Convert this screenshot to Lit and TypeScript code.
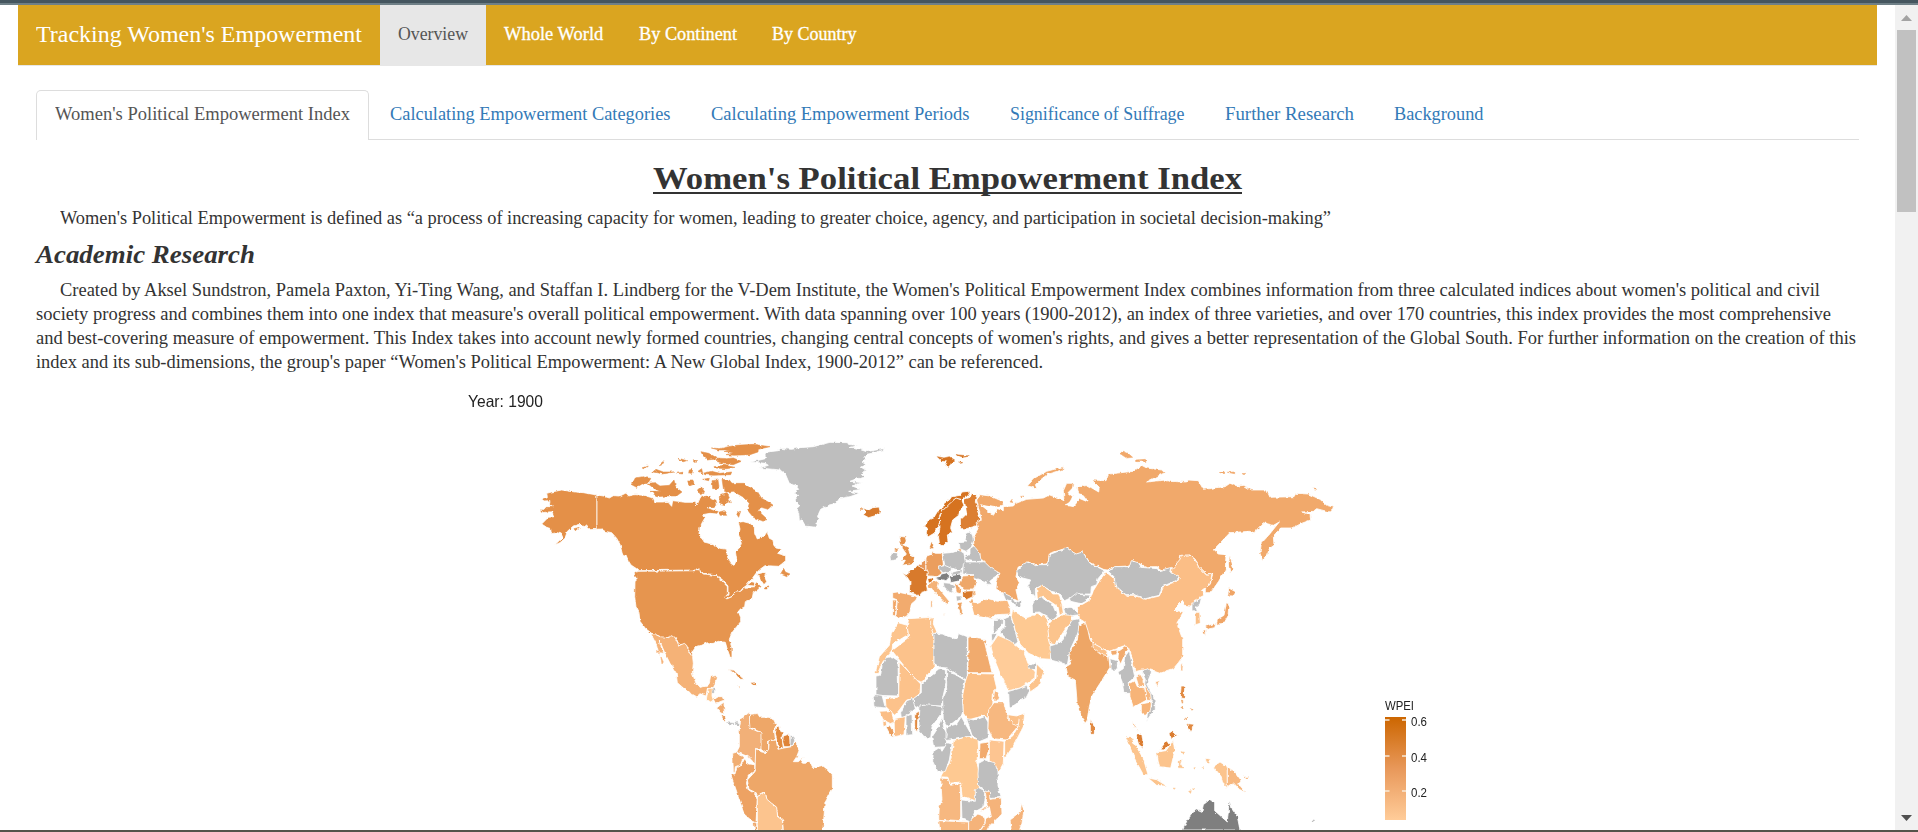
import { LitElement, html, css, svg } from "lit";
import { customElement, property } from "lit/decorators.js";

/** One line of text, widened or narrowed so that it fills a given measure. */
@customElement("fit-line")
class FitLine extends LitElement {
  @property({ type: Number }) measure = 100;
  static styles = css`
    :host { display: block; white-space: nowrap; }
    .t { display: inline-block; transform-origin: 0 50%; }
  `;
  firstUpdated() {
    const t = this.renderRoot.querySelector(".t") as HTMLElement;
    const natural = t.getBoundingClientRect().width;
    this.style.width = this.measure + "px";
    t.style.transform = `scaleX(${this.measure / natural})`;
  }
  render() {
    return html`<span class="t"><slot></slot></span>`;
  }
}

const G = "#bebebe", D = "#7f7f7f", CA = "#e49048", US = "#e6954f", RU = "#f1a96b", CN = "#fbbe86",
  IN = "#eea666", ID = "#fcc48d", AL = "#fcc28b", DR = "#ffcc99", PA = "#fec992", AN = "#f7b880",
  BR = "#eea768", NO = "#d67320", FR = "#d87a2c", W = "#ffffff";

type Shape = [string, string];
type Sheet = { x: number; y: number; land: Shape[] };

/* Country outlines, grouped in sheets drawn at three units to the pixel. */
const sheets: Sheet[] = [
  { x: 520, y: 430, land: [
    [CA, "M231,195 190,188 165,186 125,180 95,186 80,190 82,200 64,206 72,213 90,212 88,222 100,230 78,230 72,238 58,238 66,248 96,245 102,260 85,262 65,282 80,292 92,296 94,311 112,308 124,312 128,322 104,345 120,338 135,325 142,304 160,288 178,283 190,290 198,287 212,299 231,298Z"],
    [CA, "M231,195 250,198 268,204 280,197 300,198 318,189 326,198 345,194 372,196 385,200 400,204 405,216 430,216 442,214 455,229 458,212 475,214 495,217 525,217 531,225 540,205 546,196 553,200 560,194 575,207 590,212 592,224 582,232 562,232 580,240 598,244 590,252 570,250 548,254 556,262 548,275 540,292 537,315 548,322 552,336 575,342 600,355 620,358 622,380 632,400 642,406 650,390 646,364 658,354 664,337 656,315 660,297 655,277 670,275 690,280 703,292 704,308 712,327 722,320 732,319 742,304 748,325 759,330 761,345 768,354 786,358 773,370 797,377 797,392 785,402 776,409 735,407 720,418 708,430 697,445 685,458 680,466 668,475 660,485 645,487 635,500 620,506 614,500 624,495 624,468 605,447 585,434 550,430 538,420 356,422 348,415 333,405 325,392 318,375 307,372 300,343 290,325 275,308 255,304 245,297 231,298Z"],
    [US, "M350,424 L538,422 550,432 585,436 603,450 622,470 622,495 614,501 620,507 636,500 647,487 662,484 675,472 703,470 712,455 722,468 716,478 700,488 696,508 676,515 674,530 660,538 655,545 662,562 662,575 650,590 636,608 628,628 636,655 636,688 630,680 622,658 616,637 604,636 595,634 580,640 568,642 562,638 545,646 528,650 518,664 516,682 508,664 498,645 483,643 477,648 465,622 430,624 410,615 395,610 377,596 360,574 357,548 348,530 344,500 345,455 352,447Z"],
    [CA, "M680,466 695,455 708,458 703,468Z M712,432 728,428 738,428 734,440 740,455 732,464 722,450 718,440Z M732,478 745,464 748,470 740,479Z"],
  ] },
  { x: 620, y: 620, land: [
    ["#f5b277", "M93,42 103,42 120,50 147,53 153,47 165,52 177,77 193,70 200,76 208,98 218,112 220,130 217,160 228,190 240,202 262,198 268,190 272,170 290,166 285,192 280,204 262,206 258,228 240,221 230,230 205,216 190,204 172,188 168,158 150,130 135,100 118,60 120,72 132,100 116,98 110,75Z"],
    [PA, "M264,208 277,208 276,228 280,240 272,246 259,238Z"],
    ["#f1ab6f", "M280,238 292,230 310,230 314,240 300,245 288,252Z M290,264 312,246 313,282 302,279Z"],
    [CA, "M302,284 312,290 318,304 310,300Z M320,148 337,150 350,158 372,178 358,178 345,160Z M390,188 403,186 411,196 398,195Z"],
    ["#f2b078", "M358,324 362,300 372,289 388,277 390,303 392,326 415,334 424,336 425,362 425,388 407,385 406,433 385,410 350,396 358,380Z"],
    [BR, "M388,302 390,283 400,282 412,280 420,292 445,292 462,300 468,314 463,330 466,358 446,362 446,390 436,398 423,388 423,336 405,328 390,322Z"],
    ["#e28b40", "M470,320 480,318 482,334 490,338 486,350 490,385 476,388 470,356 466,340Z"],
    ["#df8438", "M490,348 508,342 512,380 492,380 488,365Z"],
    [G, "M511,346 521,348 524,362 518,378 510,376Z"],
    [BR, "M407,386 425,396 438,398 446,388 448,362 468,360 474,388 492,384 515,380 527,366 537,392 530,410 520,425 535,425 550,412 545,430 557,430 567,420 577,443 605,437 622,450 637,467 637,508 615,548 612,590 608,640 490,640 488,600 473,588 468,560 440,540 436,516 415,528 402,515 387,508 382,480 405,455Z"],
    ["#f1ad71", "M338,400 350,396 370,412 362,434 346,440 344,460 340,455Z"],
    ["#eda263", "M332,462 345,462 350,442 362,438 374,416 385,432 404,434 404,454 385,468 379,490 386,510 402,520 412,535 408,610 402,608 372,582 362,550 345,500Z"],
    ["#fcc48e", "M412,530 425,523 435,516 441,538 455,550 470,562 473,590 487,600 489,640 412,640Z"],
    ["#eda263", "M400,605 410,610 410,640 404,632Z"],
  ] },
  { x: 700, y: 430, land: [
    [G, "M150,96 180,90 196,86 195,75 202,66 235,62 240,55 275,58 300,53 340,50 362,44 390,37 440,38 442,43 475,46 450,52 490,56 484,60 500,65 550,56 552,60 520,69 500,73 492,82 495,88 486,96 498,104 484,112 500,122 484,130 496,142 470,146 450,154 486,158 456,168 484,178 446,184 478,190 450,200 418,206 408,220 384,226 362,238 352,260 358,266 348,276 348,292 316,288 306,270 298,272 296,248 290,236 298,228 285,210 296,196 280,188 296,178 286,166 268,160 256,132 240,120 178,114 205,106 196,100Z"],
    [FR, "M489,233 505,241 518,233 537,231 541,247 523,258 506,263 489,254 498,248Z"],
  ] },
  { x: 860, y: 440, land: [
    [NO, "M192,258 202,252 200,242 222,232 232,215 248,205 252,190 268,180 275,170 300,166 306,156 325,154 330,166 315,170 305,178 285,176 268,194 250,210 240,224 236,262 222,280 205,290 198,282 202,264Z"],
    [NO, "M236,290 240,262 238,230 252,208 272,188 288,174 305,180 312,196 300,210 296,226 278,240 272,262 277,274 262,285 264,302 246,322 238,310Z"],
    ["#dc7f33", "M312,178 330,172 336,160 350,165 346,184 354,195 352,212 362,238 348,258 320,266 302,266 301,240 320,222 316,198Z"],
    [CA, "M119,289 136,291 139,304 128,314 144,322 150,342 164,352 160,370 127,376 136,361 125,359 139,342 128,326 121,308Z M208,322 214,305 221,311 217,328Z"],
    [G, "M98,337 113,339 110,359 92,363 90,350Z"],
    ["#e8985a", "M172,380 178,372 184,374 186,362 197,358 198,392 182,384Z"],
    ["#eb9e5e", "M198,352 214,346 217,334 226,340 246,340 250,372 242,380 246,400 232,410 206,408 198,386Z"],
    [FR, "M126,400 143,405 146,394 160,390 172,376 205,395 202,416 198,430 203,452 182,458 176,467 148,456 150,425 142,412Z"],
    ["#f2ab6e", "M98,458 112,456 140,462 172,470 168,480 154,492 150,516 138,530 120,534 108,528 112,480 98,474Z"],
    ["#f1a566", "M98,480 110,480 106,528 98,526Z"],
    [NO, "M203,416 216,414 218,424 206,430Z"],
    ["#f4b277", "M203,434 220,424 236,422 232,440 250,462 268,484 262,494 245,478 225,460 215,442 204,444Z M212,482 217,482 217,502 212,502Z M246,522 256,520 252,528Z"],
    [G, "M235,378 254,374 275,384 272,394 250,398 236,390Z"],
    [D, "M224,413 240,410 244,402 268,397 268,412 258,422 238,418Z"],
    [G, "M248,340 270,338 300,332 312,340 316,366 308,384 296,390 272,384 254,376Z"],
    [G, "M272,398 308,388 304,402 276,406Z"],
    [D, "M268,408 304,402 304,414 292,424 272,428Z"],
    [G, "M250,428 270,430 290,440 276,448 284,462 268,456 252,440Z"],
    ["#f0a566", "M284,430 292,432 300,446 304,462 290,458Z"],
    ["#eea769", "M308,408 340,406 350,432 340,450 312,450 298,434Z"],
    [FR, "M308,454 340,452 338,470 318,480 308,470Z"],
    ["#eea565", "M292,488 308,486 304,498 308,520 300,526 298,510 292,504Z"],
    [G, "M288,468 302,468 304,480 290,484Z M298,308 318,306 320,294 314,280 332,276 338,288 340,304 334,322 318,334 300,326Z"],
    [G, "M314,352 330,342 330,326 344,316 362,322 360,342 372,354 362,364 338,364 316,360Z"],
    [G, "M310,372 316,366 340,366 364,366 378,364 388,378 414,386 420,400 388,422 396,434 378,432 380,426 352,416 340,404 308,402Z"],
    ["#f9ba80", "M334,486 350,488 385,476 412,484 442,480 450,500 452,522 410,524 390,536 368,528 342,526 336,502Z"],
  ] },
  { x: 1000, y: 440, land: [
    [RU, "M-70,180 -60,164 -30,168 8,184 10,196 -20,202 -42,198 -58,194 -36,212 -20,226 -8,206 10,212 10,200 40,198 48,190 80,178 130,174 150,164 170,172 192,182 190,152 200,130 220,130 216,154 222,176 202,192 200,198 222,196 236,170 264,184 250,164 236,162 232,142 262,136 296,156 298,142 276,120 318,122 326,102 400,94 425,76 440,84 485,90 494,98 440,126 498,120 505,124 560,126 565,120 595,122 610,148 675,140 690,130 712,138 732,136 755,150 800,150 810,172 882,170 888,160 925,162 960,178 980,196 1002,202 988,216 950,206 940,214 905,216 930,224 932,240 905,250 878,264 842,264 820,288 822,316 808,326 802,344 788,362 780,340 784,310 806,286 838,246 820,256 790,248 762,278 748,274 690,278 640,330 655,342 678,344 676,390 656,424 632,458 616,458 616,440 630,434 638,402 620,404 596,382 586,358 570,346 542,346 540,360 520,384 485,390 472,380 440,380 420,372 400,362 388,378 345,380 325,390 310,388 290,378 270,368 248,336 230,344 200,324 150,340 142,372 105,374 84,366 54,382 48,410 58,428 48,450 56,484 10,462 -12,446 -10,424 0,400 -30,382 -46,366 -58,356 -60,340 -78,318 -80,290 -66,266 -72,248 -56,238Z"],
    [W, "M204,158 218,170 208,190 196,194 220,200 240,176 264,186 248,166 232,160 228,142 218,144Z"],
    [RU, "M82,138 104,114 140,94 192,80 188,89 144,102 122,119 106,134 112,150 96,141Z M689,344 697,372 701,388 690,400 685,372Z"],
    [G, "M50,392 80,366 106,374 144,374 148,344 200,324 228,342 248,336 270,370 290,380 314,392 294,416 290,434 274,440 272,462 236,462 194,482 180,460 154,454 126,436 106,446 106,474 94,460 82,440 92,420 68,414 54,406Z"],
    [G, "M325,394 345,380 388,380 394,362 416,368 422,382 472,386 476,392 515,382 512,398 538,410 528,422 486,440 478,466 436,476 402,464 378,464 344,434 344,412Z"],
    [CN, "M540,358 544,346 570,345 586,360 596,382 620,406 636,402 630,432 604,452 612,466 582,482 574,498 552,496 548,484 522,510 550,516 530,550 548,598 548,650 535,668 520,686 480,700 452,690 425,690 405,695 396,650 384,620 370,618 325,635 278,610 266,584 254,546 238,536 232,502 270,480 280,452 300,420 318,396 342,416 346,438 378,466 402,466 436,478 478,468 490,442 530,424 538,412 514,398 516,386Z"],
    ["#f0a566", "M683,467 686,444 708,456 700,468Z M679,488 687,492 684,528 672,550 649,553 653,537 672,526Z M616,559 648,549 644,563 620,568Z M609,571 617,569 616,586Z"],
    [G, "M576,488 604,474 600,492 588,502 592,514 576,516Z"],
    ["#fbc088", "M586,517 599,517 601,550 586,554Z"],
    [ID, "M110,446 126,436 152,454 158,462 176,462 186,492 190,520 178,522 174,500 150,484 132,472 112,474Z"],
    [G, "M96,488 124,470 134,480 156,490 172,528 154,546 142,530 118,516 98,518Z"],
    [G, "M208,476 226,462 272,466 268,474 238,490 212,484Z M190,506 210,502 222,506 238,524 208,528 196,524Z"],
    [G, "M8,458 34,470 48,490 64,480 66,500 48,500 36,484 16,478Z"],
  ] },
  { x: 860, y: 610, land: [
    [AL, "M146,26 180,24 216,22 214,52 222,78 222,170 186,216 166,210 96,122 146,84 142,48Z"],
    [ID, "M114,38 142,46 144,74 98,102 96,124 68,156 52,192 46,188 58,140 88,106 94,70Z M212,24 222,24 220,42 230,64 222,78 212,50Z"],
    [G, "M48,198 62,196 66,168 76,144 96,140 114,152 116,258 48,256Z"],
    [G, "M222,70 244,72 290,88 296,70 322,80 322,212 262,174 240,172 222,160Z"],
    ["#f1ab6e", "M324,82 378,90 384,112 374,98 396,188 324,188Z"],
    [AL, "M118,156 182,222 180,250 162,266 140,270 118,300 104,316 78,290 76,266 116,262Z"],
    [G, "M240,176 256,180 258,220 248,264 244,288 184,286 178,296 162,288 160,266 184,248 184,222Z"],
    [G, "M260,178 316,212 306,248 310,300 304,318 264,350 250,330 248,268 260,240Z"],
    ["#fbbf86", "M324,190 400,192 410,234 400,252 398,290 382,326 374,316 324,330 310,310 308,256 316,214Z"],
    [G, "M40,262 46,254 66,256 76,294 42,290Z M122,308 140,272 158,266 166,296 144,316 124,324Z M138,314 156,314 158,374 138,376Z M180,288 200,284 248,290 244,310 216,350 212,384 194,382 176,360Z"],
    [CN, "M58,304 94,302 100,326 98,344 70,330Z M102,326 136,320 132,374 104,380Z M68,330 78,332 80,346 70,350Z"],
    ["#ea9d5c", "M78,350 88,346 102,364 100,382 92,378Z"],
    ["#e08a42", "M164,313 177,303 179,320 173,332 172,364 164,362Z"],
    [G, "M230,360 246,322 252,356 262,372 258,410 224,412 218,378Z M258,352 290,342 304,320 336,378 284,388 258,392Z M320,326 346,330 374,320 384,336 384,384 360,394 336,376Z"],
    [AN, "M386,300 402,278 432,278 440,312 476,346 440,390 398,386 384,356Z M404,238 418,262 416,270 400,270Z"],
    ["#fbc088", "M444,314 470,318 480,314 480,340 466,346 446,330Z"],
    ["#fcc48d", "M480,314 494,310 490,350 460,408 434,446 434,394 458,378 474,350Z"],
    [PA, "M280,392 320,380 354,388 356,420 350,456 356,480 358,530 350,540 346,572 306,558 302,516 268,520 264,502 242,500 246,492 268,460 276,430Z"],
    ["#f2ab6e", "M360,400 386,396 386,420 378,446 358,446Z"],
    ["#fdc591", "M388,390 432,394 430,460 416,486 388,450Z"],
    [G, "M220,424 240,412 246,424 262,398 276,402 268,450 256,484 234,486 218,454Z M356,460 374,450 404,458 414,486 414,530 424,562 390,566 372,540 356,528 354,492Z"],
    ["#f7b880", "M242,504 264,506 272,526 300,520 302,560 302,632 236,628 238,590 246,570Z M236,632 326,636 326,666 240,666Z"],
    [G, "M304,570 346,574 346,540 354,532 378,544 372,590 344,606 332,636 306,626Z"],
    ["#f5b37a", "M326,636 350,612 374,620 376,640 356,666 326,666Z M376,546 388,544 390,568 424,564 426,612 386,650 378,666 362,664 378,628 394,620 388,590 362,606 360,600 382,590Z M484,580 492,600 486,640 476,666 454,664 450,630 470,616 482,600Z"],
    [G, "M400,30 430,24 430,40 408,66 400,70Z M434,26 452,18 462,50 474,96 458,108 420,66 434,50Z M394,72 412,70 396,98Z"],
    [PA, "M458,-2 470,8 496,24 516,18 532,10 562,24 568,60 564,84 576,120 572,148 544,146 506,130 480,102 466,62 454,20Z"],
    [ID, "M572,32 610,14 632,16 634,34 614,60 586,104 568,100 564,60Z"],
    [G, "M636,30 656,26 658,60 630,120 622,164 602,158 572,150 570,108 604,98 622,56Z"],
    [DR, "M392,108 414,76 450,92 490,124 504,160 526,186 524,206 480,234 446,242 420,190 404,150Z"],
    [G, "M446,244 476,236 500,226 508,244 500,260 462,286 448,292Z M504,170 528,156 526,178 508,178Z"],
    [ID, "M530,162 552,184 536,228 510,246 508,224 528,206Z"],
  ] },
  { x: 1000, y: 590, land: [
    [IN, "M236,110 256,98 264,122 270,148 286,176 326,200 330,232 300,280 276,318 268,350 262,390 254,402 232,346 226,270 204,260 198,230 212,222 206,190 232,150Z"],
    ["#fbc088", "M276,158 320,182 324,198 300,192 276,172Z"],
    ["#f2ab6e", "M332,182 352,180 350,194 334,196Z M356,184 378,168 386,176 376,190 362,222 354,206Z"],
    [G, "M330,206 352,212 352,240 334,240Z"],
    [G, "M374,200 388,182 394,212 404,260 388,276 390,310 372,310 366,274 354,246 370,236Z"],
    [G, "M424,244 444,236 454,248 440,282 454,310 464,322 466,358 452,374 440,392 442,372 456,350 448,312 434,282 436,268Z"],
    ["#f7b478", "M388,280 404,272 412,290 434,294 440,330 422,340 400,352 390,320Z M424,342 454,336 452,360 436,376 424,366Z"],
    [AN, "M408,262 422,254 432,272 434,292 416,288Z M434,286 452,312 454,332 442,330Z M396,392 406,404 414,426 404,412Z"],
    ["#e18a42", "M271,388 284,408 283,430 271,430Z M543,288 554,288 553,326 541,324Z M566,401 582,403 573,426 565,412Z"],
    ["#f8b880", "M543,222 550,219 548,242 542,238Z M466,275 479,272 472,290Z"],
    ["#db7d31", "M408,432 425,430 432,476 417,464Z M479,479 500,452 508,464 494,480Z M507,430 518,422 532,436 511,448Z"],
    [ID, "M376,438 392,440 430,506 444,554 430,554 404,506Z M444,564 470,569 502,589 470,586Z M470,486 498,482 520,450 524,484 512,534 478,530Z M536,512 550,506 542,520 552,536 536,534Z M616,504 632,508 628,522 618,518Z M640,530 660,516 682,530 682,594 668,580 664,560Z"],
    ["#f7b880", "M682,530 704,544 724,572 716,582 738,608 718,598 700,578 682,590Z"],
    [D, "M548,720 562,690 588,656 606,664 610,644 628,630 644,636 644,662 682,696 688,632 698,660 712,680 720,720Z"],
  ] },
];

/* Islands too small for a coast line of their own. */
const isles: Sheet[] = [
  { x: 520, y: 430, land: [[CA, "M574,54 600,56 625,50 650,46 700,43 750,50 715,58 714,66 690,74 640,76 618,74 640,68 612,64 630,60 596,60Z M543,65 566,70 588,82 584,88 562,90 548,76Z M588,84 620,86 640,84 664,94 640,104 612,102 590,94Z M474,84 500,92 490,95Z M520,92 534,96 522,97Z M366,114 382,108 374,116Z M418,104 432,92 430,100Z M398,126 408,118 430,126 462,126 430,132Z M508,120 518,118 516,130 506,128Z M470,130 492,126 488,132Z M534,124 545,116 548,130 575,124 600,130 635,126 632,134 580,136 556,134Z M582,110 612,106 645,112 620,116 584,114Z M335,164 346,144 368,140 392,146 386,156 366,162 350,172Z M382,160 405,158 420,168 448,166 462,150 468,172 486,186 470,198 440,198 412,200 390,184 420,184 400,174Z M502,150 516,150 524,162 508,168Z M532,180 544,170 554,186 542,194Z M576,152 594,150 598,176 578,176Z M548,148 568,145 566,152Z M606,148 628,150 636,160 672,160 690,174 712,184 724,204 758,224 744,238 724,232 716,244 738,264 730,274 700,262 682,240 688,220 668,200 640,184 612,188Z M602,196 624,190 628,202 616,224 598,220Z M598,246 612,242 620,256 600,256Z M622,216 632,212 634,218Z M650,252 662,244 656,262Z M162,296 178,292 166,302Z M782,432 792,414 796,426 810,432 800,440Z M345,426 354,430 352,446 346,438Z"]] },
  { x: 860, y: 440, land: [
    [NO, "M232,50 252,54 268,50 284,60 272,70 266,82 256,74 262,64 244,62Z M288,44 328,48 310,52Z M296,66 308,68 302,70Z"],
    [RU, "M450,186 456,178 462,188Z M482,170 488,168 486,174Z"],
    [CA, "M104,330 112,326 112,332Z M4,203 8,206 6,210Z"],
    ["#f2ad70", "M296,328 302,328 302,334Z M330,488 336,478 340,486Z M342,452 346,460 340,466Z"],
    [G, "M340,404 352,406 352,416 344,414Z"],
  ] },
  { x: 1000, y: 440, land: [
    [RU, "M358,40 370,34 384,40 398,52 380,54Z M410,60 436,58 438,64 410,65Z M658,97 672,94 670,102Z M682,97 704,96 704,101Z M726,101 740,100 736,104Z M938,145 952,144 950,148Z"],
  ] },
  { x: 620, y: 620, land: [
    ["#f5b277", "M108,92 116,94 118,102Z M122,108 130,126 126,132Z M354,200 358,202 356,205Z"],
    [G, "M278,207 282,208 281,220 278,219Z M320,308 342,310 330,315Z M344,308 352,304 356,318Z"],
  ] },
  { x: 1000, y: 590, land: [
    ["#eda263", "M556,384 561,386 559,390Z M571,356 576,358 573,361Z M545,330 549,332 547,340Z M546,352 550,354 547,357Z M561,402 566,404 563,408Z"],
    [ID, "M546,485 554,487 548,490Z M582,533 587,534 583,537Z M606,533 612,534 608,537Z M566,604 574,602 570,608Z M520,594 526,595 522,598Z M578,596 583,596 580,600Z"],
    ["#f7b880", "M732,562 746,561 740,565Z"],
    [G, "M936,690 940,690 940,694 936,694Z"],
  ] },
];

const sheetView = (s: Sheet, cls: string) => svg`
  <g class=${cls} transform="translate(${s.x} ${s.y}) scale(.33333)">
    ${s.land.map(([fill, d]) => svg`<path fill=${fill} stroke=${fill} d=${d}></path>`)}
  </g>`;

@customElement("world-map")
class WorldMap extends LitElement {
  static styles = css`
    :host { display: block; }
    .map { display: block; }
    .land path { stroke: #fff; stroke-width: 2.4; stroke-linejoin: round; }
    .isle path { stroke-width: 1.6; stroke-linejoin: round; }
    .label { font-family: "Liberation Sans", Arial, sans-serif; fill: #222; }
    .year { font-size: 16.5px; }
    .legend { font-size: 13px; }
    .tick { font-size: 12px; }
    .mark { stroke: #f7ead9; stroke-width: 1.5; }
  `;
  render() {
    const ticks: [string, number][] = [["0.6", 720], ["0.4", 756], ["0.2", 791]];
    return html`<svg class="map" width="1100" height="445" viewBox="440 385 1100 445">
      <defs>
        <linearGradient id="ramp" x1="0" y1="0" x2="0" y2="1">
          <stop offset="0" stop-color="#cc6600"></stop>
          <stop offset=".5" stop-color="#e8985a"></stop>
          <stop offset="1" stop-color="#ffcc99"></stop>
        </linearGradient>
        <filter id="coast" filterUnits="userSpaceOnUse" x="440" y="385" width="1100" height="445" color-interpolation-filters="sRGB">
          <feTurbulence type="fractalNoise" baseFrequency=".22" numOctaves="2" seed="4" result="n"></feTurbulence>
          <feDisplacementMap in="SourceGraphic" in2="n" scale="3.2" xChannelSelector="R" yChannelSelector="G"></feDisplacementMap>
        </filter>
      </defs>
      <g filter="url(#coast)">
        ${sheets.map((s) => sheetView(s, "land"))}
        ${isles.map((s) => sheetView(s, "isle"))}
      </g>
      <text class="label year" x="468" y="407" textLength="75" lengthAdjust="spacingAndGlyphs">Year: 1900</text>
      <text class="label legend" x="1385" y="709.5" textLength="29" lengthAdjust="spacingAndGlyphs">WPEI</text>
      <rect x="1385" y="717" width="21" height="103" fill="url(#ramp)"></rect>
      ${ticks.map(([t, y]) => svg`
        <path class="mark" d="M1385,${y}h4.500M1402,${y}h4"></path>
        <text class="label tick" x="1411" y=${y + 5.5} textLength="16" lengthAdjust="spacingAndGlyphs">${t}</text>`)}
    </svg>`;
  }
}

@customElement("app-root")
class AppRoot extends LitElement {
  static styles = css`
    :host {
      display: flex; flex-direction: column; height: 832px; overflow: hidden;
      background: #fff; color: #333; box-sizing: border-box;
      border-top: 3px solid #45565f; border-bottom: 2px solid #55534a;
      font: 18px/24px "Liberation Serif", Georgia, serif;
    }
    .rim { height: 2px; background: #6f8087; flex: none; }
    .view { flex: 1; display: flex; min-height: 0; }
    .page { flex: 1; overflow: hidden; padding: 0 18px; }
    .bar { display: flex; height: 60px; background: #daa520; border-bottom: 1px solid #e7e7e7; color: #fff; }
    .brand { font-size: 23px; line-height: 60px; padding: 0 18px; }
    .item { line-height: 59px; padding: 0 17.8px; -webkit-text-stroke: .3px currentColor; }
    .item.on { background: #e7e7e7; color: #555; padding: 0 18px; height: 61px; -webkit-text-stroke: 0; }
    .tabs { display: flex; margin: 24px 18px 0; height: 49px; border-bottom: 1px solid #ddd; color: #337ab7; }
    .tab { line-height: 48px; padding: 0 19px; margin-right: 2.4px; }
    .tab.on { border: 1px solid #ddd; border-bottom: 0; border-radius: 5px 5px 0 0; background: #fff; color: #555; height: 49px; line-height: 46px; padding: 0 18px; margin-right: 2.4px; }
    .body { padding: 0 18px; }
    .title { margin: 21px 0 0; display: flex; justify-content: center; font: bold 31px/34px "Liberation Serif", serif; }
    .rule { height: 31px; border-bottom: 2px solid #333; line-height: 36px; }
    .para { margin: 12px 0 0; line-height: 24.1px; }
    .sub { margin: 12px 0 0; font: italic bold 25px/26px "Liberation Serif", serif; }
    .para + .sub + .para { margin-top: 9.5px; }
    .indent { padding-left: 24px; }
    .map { margin: 11px 0 0 404px; }
    .scroll { width: 23px; flex: none; background: #f1f1f1; display: flex; flex-direction: column; align-items: center; }
    .arrow { display: block; }
    .thumb { width: 19px; height: 182px; background: #c1c1c1; }
    .gap { flex: 1; }
  `;
  render() {
    const nav: [string, number][] = [["Overview", 70], ["Whole World", 99.3], ["By Continent", 98], ["By Country", 84.5]];
    const tabs: [string, number][] = [
      ["Women's Political Empowerment Index", 295], ["Calculating Empowerment Categories", 280.5],
      ["Calculating Empowerment Periods", 258.5], ["Significance of Suffrage", 174.5],
      ["Further Research", 129], ["Background", 89.5]];
    const lines: [string, number][] = [
      ["Created by Aksel Sundstron, Pamela Paxton, Yi-Ting Wang, and Staffan I. Lindberg for the V-Dem Institute, the Women's Political Empowerment Index combines information from three calculated indices about women's political and civil", 1760],
      ["society progress and combines them into one index that measure's overall political empowerment. With data spanning over 100 years (1900-2012), an index of three varieties, and over 170 countries, this index provides the most comprehensive", 1795],
      ["and best-covering measure of empowerment. This Index takes into account newly formed countries, changing central concepts of women's rights, and gives a better representation of the Global South. For further information on the creation of this", 1820],
      ["index and its sub-dimensions, the group's paper “Women's Political Empowerment: A New Global Index, 1900-2012” can be referenced.", 1007]];
    return html`
      <div class="rim"></div>
      <div class="view">
        <main class="page">
          <nav class="bar">
            <fit-line class="brand" .measure=${326}>Tracking Women's Empowerment</fit-line>
            ${nav.map(([t, w], i) => html`<fit-line class="item ${i ? "" : "on"}" .measure=${w}>${t}</fit-line>`)}
          </nav>
          <div class="tabs">
            ${tabs.map(([t, w], i) => html`<fit-line class="tab ${i ? "" : "on"}" .measure=${w}>${t}</fit-line>`)}
          </div>
          <section class="body">
            <h2 class="title"><fit-line class="rule" .measure=${589}>Women's Political Empowerment Index</fit-line></h2>
            <div class="para indent"><fit-line .measure=${1271}>Women's Political Empowerment is defined as “a process of increasing capacity for women, leading to greater choice, agency, and participation in societal decision-making”</fit-line></div>
            <h3 class="sub"><fit-line .measure=${219}>Academic Research</fit-line></h3>
            <div class="para">
              ${lines.map(([t, w], i) => html`<fit-line class=${i ? "" : "indent"} .measure=${w}>${t}</fit-line>`)}
            </div>
            <world-map class="map"></world-map>
          </section>
        </main>
        <aside class="scroll">
          <svg class="arrow" width="23" height="25"><path d="M6,16 11.500,10 17,16Z" fill="#a3a3a3"></path></svg>
          <div class="thumb"></div>
          <div class="gap"></div>
          <svg class="arrow" width="23" height="25"><path d="M6,10 11.500,16 17,10Z" fill="#505050"></path></svg>
        </aside>
      </div>`;
  }
}
